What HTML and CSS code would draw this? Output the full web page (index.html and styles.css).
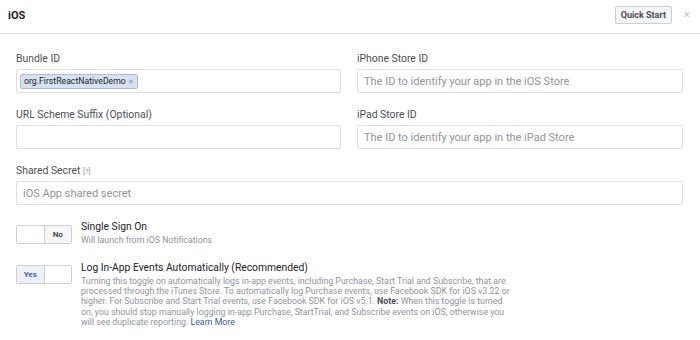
FILE: index.html
```html
<!DOCTYPE html>
<html>
<head>
<meta charset="utf-8">
<link rel="stylesheet" href="styles.css">
</head>
<body>
<div class="panel">
  <div class="header">
    <div class="title">iOS</div>
    <div class="actions">
      <button class="qs">Quick Start</button>
      <span class="close">&#x2715;</span>
    </div>
  </div>
  <div class="content">
    <div class="grid">
      <div class="field">
        <div class="label">Bundle ID</div>
        <div class="input"><span class="token">org.FirstReactNativeDemo <span class="tx">&#x2715;</span></span></div>
      </div>
      <div class="field">
        <div class="label">iPhone Store ID</div>
        <div class="input"><span class="ph">The ID to identify your app in the iOS Store</span></div>
      </div>
      <div class="field">
        <div class="label">URL Scheme Suffix (Optional)</div>
        <div class="input"></div>
      </div>
      <div class="field">
        <div class="label">iPad Store ID</div>
        <div class="input"><span class="ph">The ID to identify your app in the iPad Store</span></div>
      </div>
      <div class="field full">
        <div class="label">Shared Secret <span class="q">[?]</span></div>
        <div class="input"><span class="ph">iOS App shared secret</span></div>
      </div>
    </div>
    <div class="toggle-row first">
      <div class="toggle"><span class="seg"></span><span class="seg on no">No</span></div>
      <div class="tinfo">
        <div class="ttitle">Single Sign On</div>
        <div class="tdesc">Will launch from iOS Notifications</div>
      </div>
    </div>
    <div class="toggle-row second">
      <div class="toggle"><span class="seg on yes">Yes</span><span class="seg"></span></div>
      <div class="tinfo">
        <div class="ttitle">Log In-App Events Automatically (Recommended)</div>
        <div class="tdesc long">Turning this toggle on automatically logs in-app events, including Purchase, Start Trial and Subscribe, that are<br>processed through the iTunes Store. To automatically log Purchase events, use Facebook SDK for iOS v3.22 or<br>higher. For Subscribe and Start Trial events, use Facebook SDK for iOS v5.1. <b>Note:</b> When this toggle is turned<br>on, you should stop manually logging in-app Purchase, StartTrial, and Subscribe events on iOS, otherwise you<br>will see duplicate reporting. <a class="link">Learn More</a></div>
      </div>
    </div>
  </div>
</div>
</body>
</html>
```
FILE: styles.css
```css
* { box-sizing: border-box; }
html, body { margin: 0; padding: 0; background: #fff; }
body { font-family: Roboto, "Liberation Sans", Arial, sans-serif; color: #1d2129; width: 700px; height: 340px; overflow: hidden; }
.header { height: 34px; border-bottom: 1px solid #e5e5e5; display: flex; align-items: center; justify-content: space-between; padding: 0 9px 3px 8px; }
.title { font-size: 11px; font-weight: bold; color: #1d2129; }
.actions { display: flex; align-items: center; gap: 11px; }
.qs { font-family: inherit; font-size: 9px; font-weight: bold; color: #4b4f56; background: #f5f6f7; border: 1px solid #ccd0d5; border-radius: 2px; height: 18px; padding: 0 5px; margin: 0; }
.close { color: #bec2c9; font-size: 9px; width: 8px; text-align: center; }
.content { padding: 18px 17px 0 16px; }
.grid { display: grid; grid-template-columns: 325px 326px; column-gap: 16px; row-gap: 15px; }
.full { grid-column: 1 / 3; }
.label { font-size: 10.4px; color: #4b4f56; height: 17px; line-height: 13px; }
.q { font-size: 7.5px; color: #90949c; }
.input { height: 24px; border: 1px solid #dddfe2; border-radius: 2px; display: flex; align-items: center; padding: 0 6px; }
.ph { font-size: 11px; color: #90949c; }
.token { font-size: 8.7px; color: #1d2129; background: #d8e1f0; border: 1px solid #a8bddc; border-radius: 2px; height: 15px; line-height: 13px; padding: 0 3px; margin-left: -3px; }
.tx { color: #90949c; font-size: 7px; }
.toggle-row { display: flex; align-items: flex-start; }
.toggle-row.first { margin-top: 15px; }
.toggle-row.second { margin-top: 15px; }
.toggle { width: 56px; height: 19px; border: 1px solid #ccd0d5; border-radius: 2px; display: flex; }
.first .toggle { margin-top: 5px; }
.second .toggle { margin-top: 4px; }
.seg { flex: 1; background: #fff; }
.seg.on { font-size: 8px; font-weight: bold; display: flex; align-items: center; justify-content: center; }
.no { color: #4b4f56; border-left: 1px solid #ccd0d5; background: #f5f6f7; }
.yes { color: #4267b2; border-right: 1px solid #ccd0d5; background: #eef1f6; }
.tinfo { margin-left: 9px; }
.ttitle { font-size: 10.3px; color: #1d2129; line-height: 13px; }
.tdesc { font-size: 8.8px; color: #90949c; line-height: 12px; margin-top: 1px; }
.tdesc.long { line-height: 10.2px; margin-top: 2px; white-space: nowrap; }
.tdesc b { color: #4b4f56; }
.link { color: #385898; }
```
